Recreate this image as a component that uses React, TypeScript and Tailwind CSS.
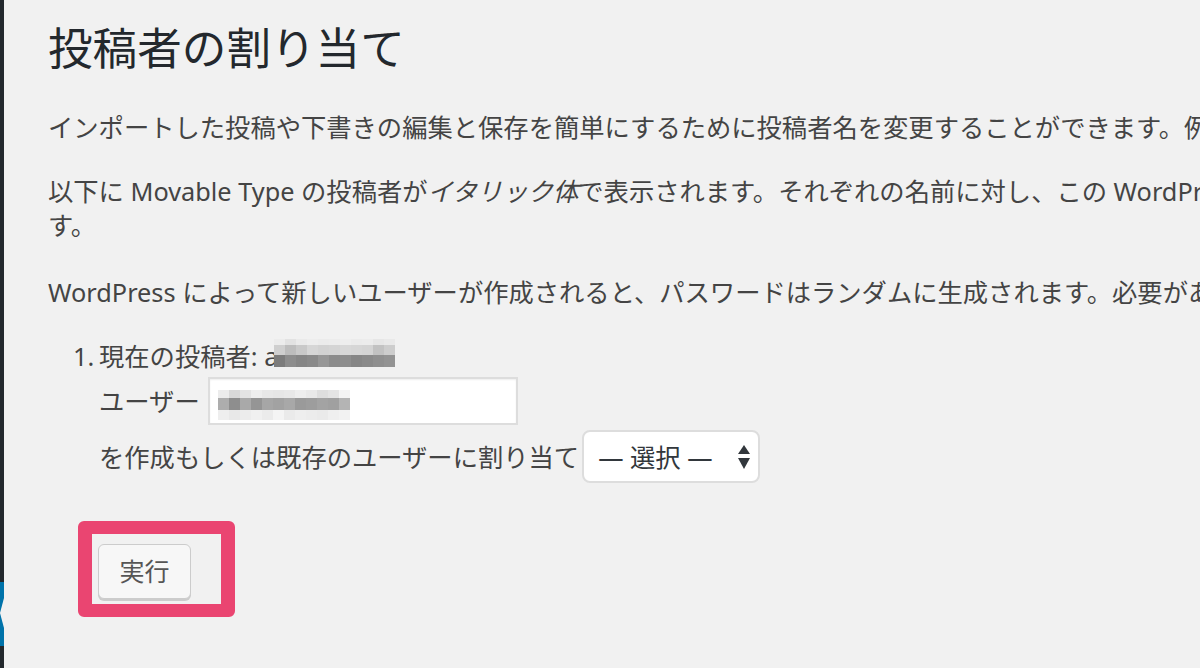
import React from "react";

function Mosaic({ rows, heights, cell }: { rows: string[][]; heights: number[]; cell: number }) {
  return (
    <div className="flex flex-col blur-[0.4px]">
      {rows.map((r, i) => (
        <div key={i} className="flex" style={{ height: heights[i] }}>
          {r.map((c, j) => (
            <div key={j} style={{ width: cell, backgroundColor: c }} />
          ))}
        </div>
      ))}
    </div>
  );
}

const authorRows = [
  ["#ececec", "#e2e2e2", "#eaeaea", "#ededed", "#ebebeb", "#ececec", "#eeeeee", "#ebebeb", "#ececec", "#e6e6e6", "#e9e9e9"],
  ["#cfcfcf", "#bdbdbd", "#c9c9c9", "#d6d6d6", "#d2d2d2", "#d4d4d4", "#d8d8d8", "#d6d6d6", "#d4d4d4", "#c2c2c2", "#cdcdcd"],
  ["#7c7c7c", "#8d8d8d", "#868686", "#8a8a8a", "#979797", "#8c8c8c", "#8e8e8e", "#868686", "#8a8a8a", "#8f8f8f", "#939393"],
];

const inputRows = [
  ["#ececec", "#d9d9d9", "#e3e3e3", "#eeeeee", "#e8e8e8", "#e6e6e6", "#e8e8e8", "#eeeeee", "#e9e9e9", "#dedede", "#e4e4e4", "#f4f4f4"],
  ["#adadad", "#8e8e8e", "#a9a9a9", "#959595", "#a6a6a6", "#a2a2a2", "#a8a8a8", "#9a9a9a", "#9d9d9d", "#a3a3a3", "#a0a0a0", "#b4b4b4"],
  ["#eeeeee", "#e8e8e8", "#ececec", "#f0f0f0", "#ebebeb", "#f4f4f4", "#eaeaea", "#eeeeee", "#ececec", "#eaeaea", "#efefef", "#f2f2f2"],
];

export default function App() {
  return (
    <div className="w-[1200px] h-[668px] overflow-hidden bg-[#f1f1f1] flex font-['Noto_Sans','Noto_Sans_CJK_JP',sans-serif] text-[#444]">
      {/* admin menu edge */}
      <div className="w-[4px] shrink-0 flex flex-col">
        <div className="h-[582px] bg-[#23282d]" />
        <div className="relative h-[64px] bg-[#0073aa]">
          <div className="absolute right-0 top-[16px] w-0 h-0 border-y-[15px] border-y-transparent border-r-[4px] border-r-[#f1f1f1]" />
        </div>
        <div className="flex-1 bg-[#23282d]" />
      </div>

      <div className="flex-1 pl-[44px] flex flex-col items-start">
        <h1 className="mt-[19px] text-[44.6px] leading-[58px] text-[#23282d] font-normal whitespace-nowrap">
          投稿者の割り当て
        </h1>

        <p className="mt-[33px] text-[25.3px] leading-[34px] whitespace-nowrap">
          インポートした投稿や下書きの編集と保存を簡単にするために投稿者名を変更することができます。例えば、インポートした投稿の投稿者を admin アカウントにすることができます。
        </p>

        <p className="mt-[30px] text-[25.3px] leading-[34px] whitespace-nowrap">
          以下に Movable Type の投稿者が<em className="italic">イタリック体</em>で表示されます。それぞれの名前に対し、この WordPress サイトのユーザーをメニューから選択するか、テキストボックスに名前を入力することができま
          <br />
          す。
        </p>

        <p className="mt-[33px] text-[25.3px] leading-[34px] whitespace-nowrap">
          WordPress によって新しいユーザーが作成されると、パスワードはランダムに生成されます。必要があれば後で変更してください。
        </p>

        <div className="mt-[30px] ml-[25px] flex text-[25.3px] leading-[34px]">
          <span className="w-[26px] shrink-0">1.</span>
          <div className="flex flex-col">
            <div className="h-[34px] flex items-start whitespace-nowrap">
              <span>現在の投稿者: a</span>
              <div className="-ml-[4px]">
                <Mosaic rows={authorRows} heights={[6, 10, 12]} cell={11} />
              </div>
            </div>
            <div className="mt-[4px] flex items-center whitespace-nowrap">
              <span>ユーザー</span>
              <div className="ml-[8px] w-[310px] h-[48px] bg-white border-2 border-[#dddddd] shadow-[inset_0_1px_2px_rgba(0,0,0,0.07)] pl-[8px] pt-[11px]">
                <Mosaic rows={inputRows} heights={[8, 12, 10]} cell={11} />
              </div>
            </div>
            <div className="mt-[5px] flex items-center whitespace-nowrap">
              <span>を作成もしくは既存のユーザーに割り当て</span>
              <div className="ml-[3px] w-[178px] h-[53px] bg-white border-2 border-[#dddddd] rounded-[8px] flex items-center justify-between pl-[14px] pr-[8px] text-[#32373c]">
                <span>— 選択 —</span>
                <svg width="12" height="24" viewBox="0 0 12 24">
                  <polygon points="6,0 12,9 0,9" fill="#32373c" />
                  <polygon points="0,13 12,13 6,24" fill="#32373c" />
                </svg>
              </div>
            </div>
          </div>
        </div>

        <div className="mt-[38px] ml-[30px] inline-flex border-x-[14px] border-y-[13px] border-[#ea4571] rounded-[6px] pl-[6px] pt-[10px] pr-[30px] pb-[5px]">
          <button className="w-[93px] h-[55px] bg-[#f7f7f7] border border-[#cccccc] rounded-[6px] shadow-[0_2px_0_#cccccc] text-[25px] text-[#555] flex items-center justify-center">
            実行
          </button>
        </div>
      </div>
    </div>
  );
}
